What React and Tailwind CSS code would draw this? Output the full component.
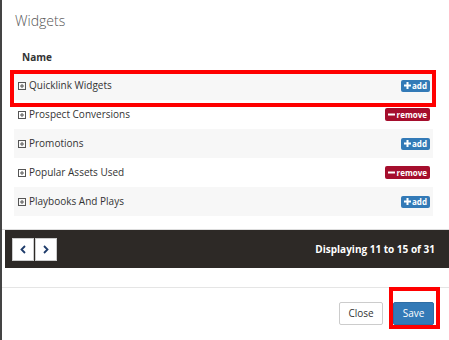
import React from "react";

const rows = [
  { name: "Quicklink Widgets", added: false },
  { name: "Prospect Conversions", added: true },
  { name: "Promotions", added: false },
  { name: "Popular Assets Used", added: true },
  { name: "Playbooks And Plays", added: false },
];

const PlusBox = () => (
  <svg width="8" height="8" viewBox="0 0 8 8" className="shrink-0">
    <rect x="0.5" y="0.5" width="7" height="7" fill="none" stroke="#555" strokeWidth="1" />
    <path d="M4 2v4M2 4h4" stroke="#555" strokeWidth="1" />
  </svg>
);

const ActionButton = ({ added }) =>
  added ? (
    <button className="h-[13px] px-[3px] rounded-[2px] bg-[#a50e2d] text-white text-[8px] font-bold flex items-center gap-[2px] leading-none">
      <svg width="7" height="7" viewBox="0 0 7 7">
        <path d="M0 2.5h7v2H0z" fill="white" />
      </svg>
      remove
    </button>
  ) : (
    <button className="h-[12px] px-[3px] rounded-[2px] bg-[#337ab7] text-white text-[8px] font-bold flex items-center gap-[1px] leading-none">
      <svg width="7" height="7" viewBox="0 0 7 7">
        <path d="M2.5 0h2v7h-2zM0 2.5h7v2H0z" fill="white" />
      </svg>
      add
    </button>
  );

const Chevron = ({ dir }) => (
  <svg width="6" height="9" viewBox="0 0 6 9">
    <polyline
      points={dir === "left" ? "5,1 1.5,4.5 5,8" : "1,1 4.5,4.5 1,8"}
      fill="none"
      stroke="#1d3b6a"
      strokeWidth="1.8"
    />
  </svg>
);

export default function App() {
  return (
    <div
      className="relative w-[449px] h-[340px] overflow-hidden bg-[#444] flex"
      style={{ fontFamily: '"Open Sans", sans-serif' }}
    >
      <div className="ml-[2px] w-[447px] h-full bg-white flex flex-col">
        <div className="h-[44px] pl-[13px] pt-[11px]">
          <h2 className="text-[14px] font-light text-[#555] leading-[20px]">Widgets</h2>
        </div>

        <div className="ml-[12px] mr-[16px]">
          <div className="h-[27px] flex items-center pl-[8px] text-[10px] font-bold text-[#333]">Name</div>
          {rows.map((r, i) => (
            <div
              key={r.name}
              className={`h-[29px] flex items-center justify-between pl-[4px] pr-[3px] ${
                i % 2 === 0 ? "bg-[#f7f7f7]" : "bg-white"
              }`}
            >
              <div className="flex items-center gap-[3px] text-[10px] text-[#333]">
                <PlusBox />
                <span>{r.name}</span>
              </div>
              <ActionButton added={r.added} />
            </div>
          ))}
        </div>

        <div className="mt-[13px] border-t border-[#ddd]" />
        <div className="ml-[3px] h-[38px] bg-[#2d2926] flex items-center justify-between pl-[7px] pr-[14px]">
          <div className="flex gap-[1px]">
            <button className="w-[22px] h-[23px] bg-white border border-[#ccc] flex items-center justify-center">
              <Chevron dir="left" />
            </button>
            <button className="w-[22px] h-[23px] bg-white border border-[#ccc] flex items-center justify-center">
              <Chevron dir="right" />
            </button>
          </div>
          <span className="text-white text-[10px] font-bold">Displaying 11 to 15 of 31</span>
        </div>

        <div className="mt-[19px] border-t border-[#e5e5e5]" />
        <div className="flex justify-end gap-[10px] pt-[14px] pr-[15px]">
          <button className="w-[44px] h-[23px] bg-white border border-[#ccc] rounded-[2px] text-[10px] text-[#333]">
            Close
          </button>
          <button className="w-[41px] h-[23px] bg-[#337ab7] border border-[#2e6da4] rounded-[2px] text-[10px] text-white">
            Save
          </button>
        </div>
      </div>

      <div className="absolute left-[10px] top-[70px] w-[426px] h-[37px] border-[4px] border-[#f00]" />
      <div className="absolute left-[389px] top-[287px] w-[51px] h-[42px] border-[4px] border-[#f00]" />
    </div>
  );
}
